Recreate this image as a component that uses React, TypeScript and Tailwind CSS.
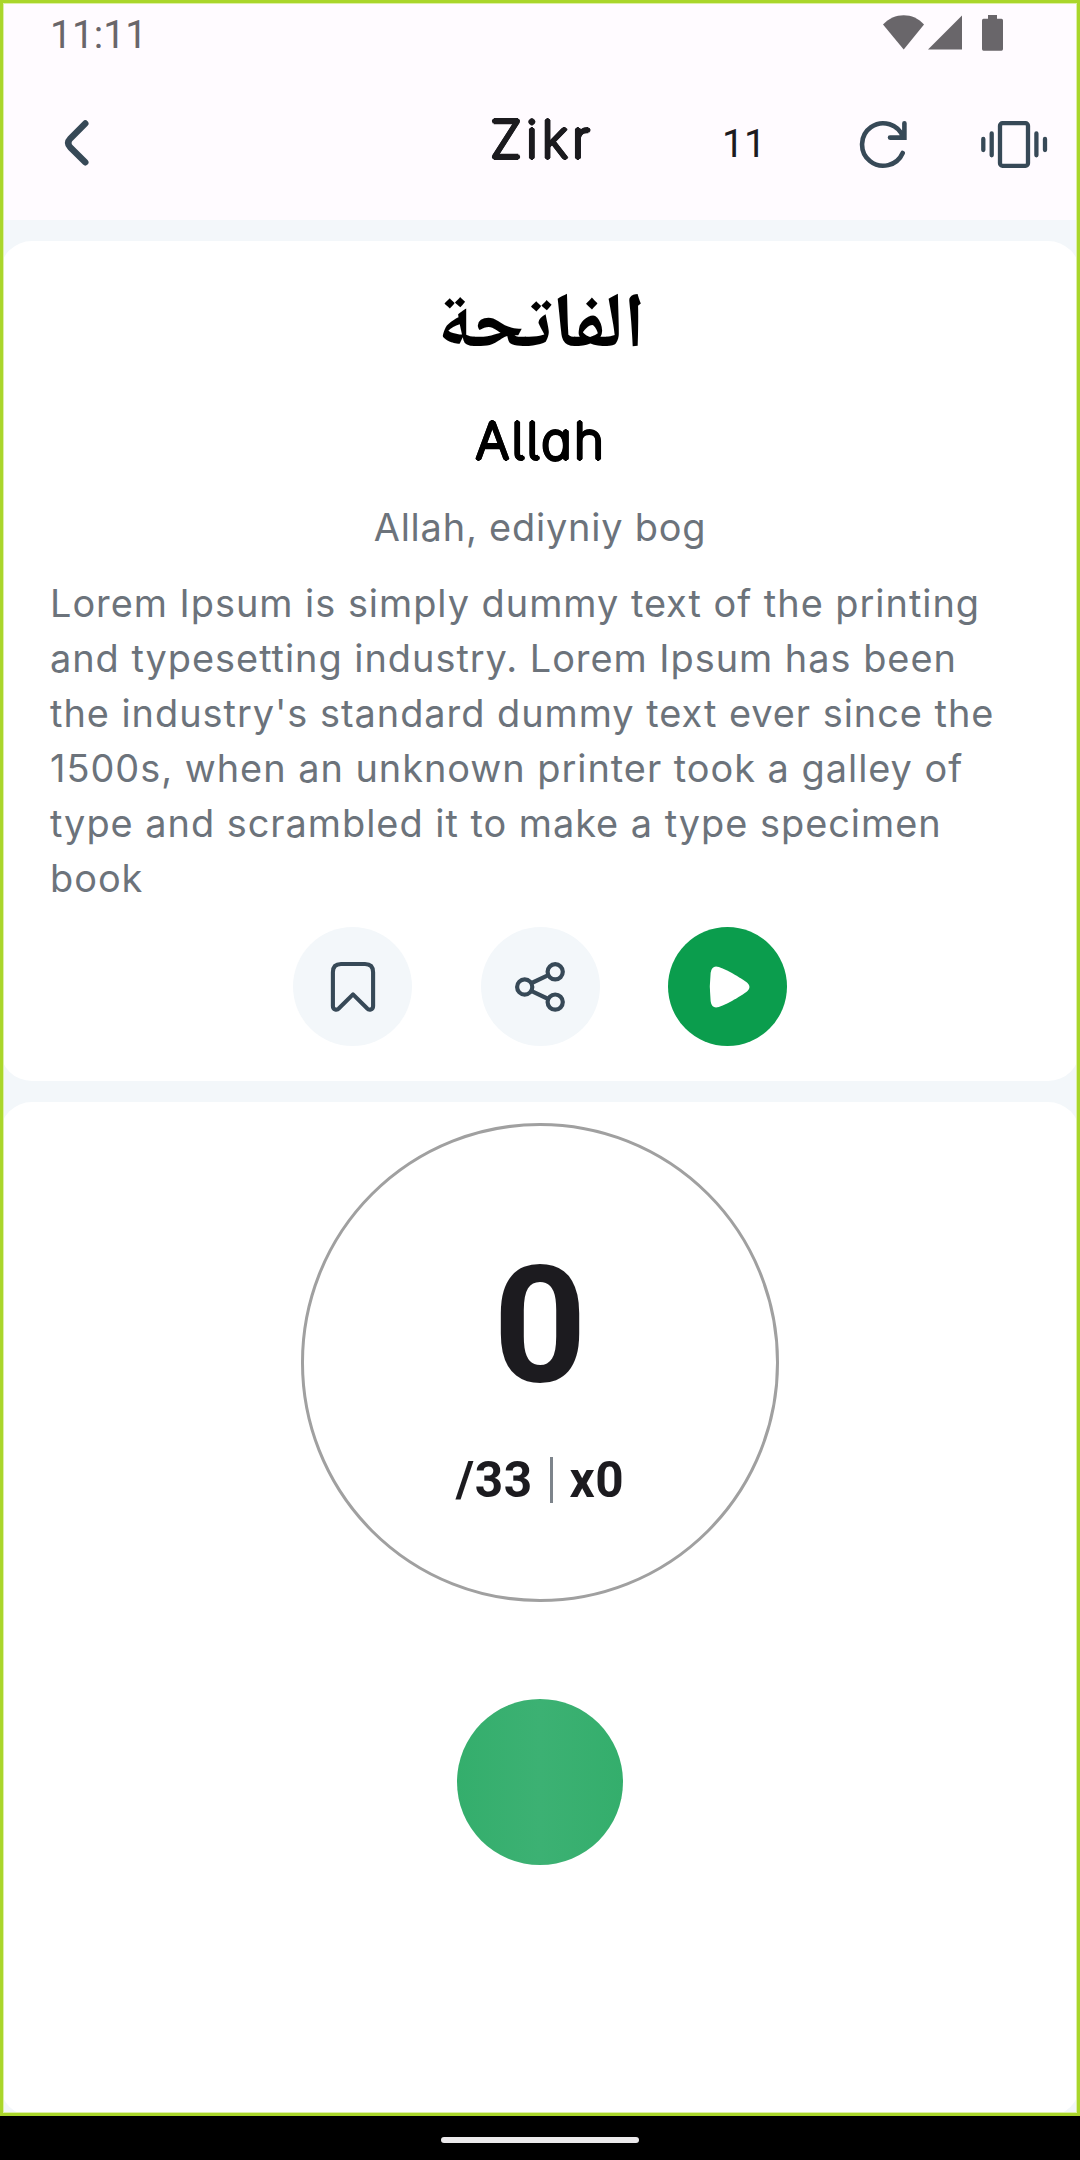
import React from 'react';

function StatusBar() {
  return (
    <div className="flex h-[66px] items-start justify-between pl-[50px] pr-[76px]">
      <span className="pt-[12px] font-['Roboto'] text-[39px] leading-[46px] text-[#69666a]">11:11</span>
      <svg className="mt-[14px]" width="122" height="38" viewBox="882 14 122 38" fill="#69666a">
        <path d="M883 24.5C894 12 913.500 12 924 24.500L903.700 49.500Z" />
        <path d="M962 15.500V49.500H928Z" />
        <path d="M988 15H997V18.700H1001.500Q1003 18.700 1003 20.500V49Q1003 50.700 1001.500 50.700H983.500Q982 50.700 982 49V20.500Q982 18.700 983.500 18.700H988Z" />
      </svg>
    </div>
  );
}

function Header() {
  return (
    <header className="grid h-[154px] grid-cols-3 items-start">
      <button className="ml-[62px] mt-[52px] w-[30px]" aria-label="Back">
        <svg width="30" height="50" viewBox="62 118 30 50" fill="none" stroke="#374957" strokeWidth="6.400" strokeLinecap="round" strokeLinejoin="round">
          <path d="M85.300 123.500L70.400 138.400Q66 143 70.400 147.500L85.300 162.300" />
        </svg>
      </button>
      <h1 className="mt-[42px] pl-[4px] text-center font-['Inter'] text-[52px] font-extralight leading-[64px] tracking-[4px] text-[#1c1b1f] [text-shadow:1.8px_0_0,-1.8px_0_0,0_1.8px_0,0_-1.8px_0,1.3px_1.3px_0,-1.3px_1.3px_0,1.3px_-1.3px_0,-1.3px_-1.3px_0]">Zikr</h1>
      <div className="flex items-start">
        <span className="ml-[2px] mt-[55px] w-[44px] font-['Roboto'] text-[39px] leading-[46px] text-[#1c1b1f]">11</span>
        <svg className="ml-[92px] mt-[52px] shrink-0" width="52" height="52" viewBox="858 118 52 52" fill="none" stroke="#374957" strokeWidth="4.600" strokeLinecap="round">
          <path d="M902.700 153A21.200 21.200 0 1 1 903.200 137.300M904.400 123.300V137.600H890" />
        </svg>
        <svg className="ml-[70px] mt-[52px] shrink-0" width="68" height="52" viewBox="980 118 68 52" fill="none" stroke="#374957" strokeWidth="4.300" strokeLinecap="round">
          <rect x="1000" y="123.200" width="28" height="42.600" rx="2.500" />
          <path d="M983.300 139V150M991.700 133.500V155.300M1036.400 133.500V155.300M1045 139V150" />
        </svg>
      </div>
    </header>
  );
}

function ActionButtons() {
  return (
    <div className="mt-[21.500px] flex justify-center gap-[68.5px]">
      <button className="flex size-[119px] items-center justify-center rounded-full bg-[#f3f7fa]" aria-label="Bookmark">
        <svg width="50" height="54" viewBox="327.500 959.500 50 54" fill="none" stroke="#374957" strokeWidth="4.100" strokeLinecap="round" strokeLinejoin="round">
          <path d="M340.500 963.500H364.500Q372.600 963.500 372.600 971.700V1005.500C372.600 1009.500 368.500 1010 366.500 1007.800L352.500 993.900L338.500 1007.800C336.500 1010 332.400 1009.500 332.400 1005.500V971.700Q332.400 963.500 340.500 963.500Z" />
        </svg>
      </button>
      <button className="flex size-[119px] items-center justify-center rounded-full bg-[#f3f7fa]" aria-label="Share">
        <svg width="54" height="54" viewBox="513 959.500 54 54" fill="none" stroke="#374957" strokeWidth="4.200">
          <circle cx="524.700" cy="986.500" r="7.600" />
          <circle cx="555.200" cy="971.300" r="7.600" />
          <circle cx="555.200" cy="1001.600" r="7.600" />
          <path d="M531.700 982.500L548.300 974.600M531.700 990.700L548.300 998.500" />
        </svg>
      </button>
      <button className="flex size-[119px] items-center justify-center rounded-full bg-[#0b9d4d]" aria-label="Play">
        <svg width="50" height="50" viewBox="703 961.500 50 50" fill="white">
          <path d="M716 966C722 966 742 978 747.500 982.500Q751.500 986.500 747.500 990.500C742 995 722 1007 716 1007Q711.500 1007 710.600 1000.500Q709 986.500 710.600 972.500Q711.500 966 716 966Z" />
        </svg>
      </button>
    </div>
  );
}

export default function App() {
  return (
    <div className="flex h-[2160px] w-[1080px] flex-col overflow-hidden bg-black">
      <div className="relative flex h-[2116px] flex-col bg-[#f3f7fa]">
        <div className="bg-[#fffbff]">
          <StatusBar />
          <Header />
        </div>

        <section className="mt-[21px] flex h-[840px] flex-col rounded-[32px] bg-white">
          <h2 dir="rtl" className="mt-[39px] pl-[3px] text-center font-['Noto_Naskh_Arabic',serif] text-[78px] font-bold leading-[100px] text-black">الفاتحة</h2>
          <h3 className="mt-[29px] pl-[2px] text-center font-['Inter'] text-[51px] font-extralight leading-[64px] tracking-[2.5px] text-black [font-feature-settings:'cv11','cv05'] [text-shadow:1.8px_0_0,-1.8px_0_0,0_1.8px_0,0_-1.8px_0,1.3px_1.3px_0,-1.3px_1.3px_0,1.3px_-1.3px_0,-1.3px_-1.3px_0]">Allah</h3>
          <p className="mt-[26.500px] text-center font-['Inter'] text-[37.9px] leading-[55px] tracking-[0.8px] text-[#6c737b]">Allah, ediyniy bog</p>
          <p className="mt-[21px] whitespace-pre-line pl-[50px] font-['Inter'] text-[37.9px] leading-[55px] tracking-[0.98px] text-[#6c737b]">
            {"Lorem Ipsum is simply dummy text of the printing\nand typesetting industry. Lorem Ipsum has been\nthe industry's standard dummy text ever since the\n1500s, when an unknown printer took a galley of\ntype and scrambled it to make a type specimen\nbook"}
          </p>
          <ActionButtons />
        </section>

        <section className="mt-[21px] flex flex-1 flex-col items-center rounded-[32px] bg-white">
          <div className="mt-[21px] flex h-[479px] w-[478px] flex-col items-center rounded-full border-[3px] border-[#a0a0a0] font-['Roboto'] font-bold text-[#1c1b1f]">
            <span className="mt-[103px] text-[163px] leading-[194px]">0</span>
            <div className="mt-[28px] flex items-center">
              <span className="text-[49.5px] leading-[58px] tracking-[0.5px]">/33</span>
              <span className="ml-[17px] mr-[17px] h-[46px] w-[3px] bg-[#7d848b]" />
              <span className="text-[49.5px] leading-[58px] tracking-[0.5px]">x0</span>
            </div>
          </div>
          <button className="mt-[97px] size-[166px] rounded-full bg-linear-to-r from-[#34ae6c] via-[#3cb173] to-[#34ae6c]" aria-label="Count" />
        </section>

        <div className="pointer-events-none absolute inset-0 border-[3px] border-[#aad62b]">
          <div className="h-full border border-[#ddf0a8]" />
        </div>
      </div>
      <div className="flex flex-1 justify-center pt-[21px]">
        <div className="h-[6px] w-[198px] rounded-full bg-[#ebe9eb]" />
      </div>
    </div>
  );
}
